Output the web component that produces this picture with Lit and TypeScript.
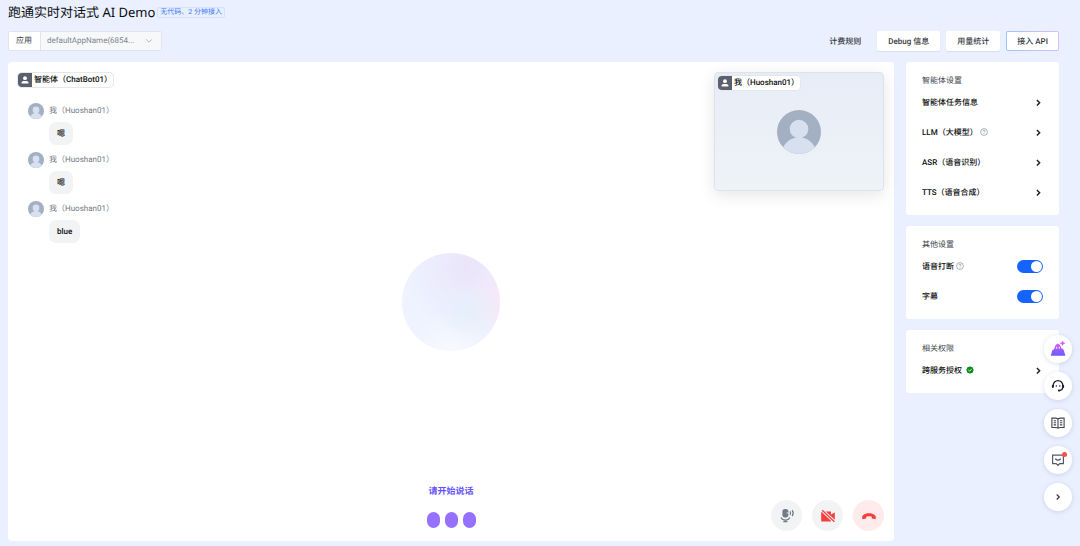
import { LitElement, html, css, svg, nothing } from "lit";
import { customElement, property, state } from "lit/decorators.js";

const avatar = html`<svg viewBox="0 0 44 44" aria-hidden="true">
  <defs><clipPath id="round"><circle cx="22" cy="22" r="22" /></clipPath></defs>
  <g clip-path="url(#round)">
    <rect width="44" height="44" fill="#a3afc3" />
    <circle cx="22" cy="19" r="9.3" fill="#d6e0ef" />
    <path d="M4 44C6 33 13 27.5 22 27.5S38 33 40 44Z" fill="#d6e0ef" />
  </g>
</svg>`;

const chevronRight = html`<svg class="chevron" viewBox="0 0 8 8" aria-hidden="true">
  <path d="M2.6 1.8 5 4.2 2.6 6.6" fill="none" stroke="currentColor" stroke-width="1.3" />
</svg>`;

const helpIcon = html`<svg class="help" viewBox="0 0 16 16" aria-hidden="true">
  <circle cx="8" cy="8" r="6.8" fill="none" stroke="#80868f" stroke-width="1.3" />
  <path d="M5.8 6.6C5.8 5.2 6.8 4.4 8 4.4S10.2 5.2 10.2 6.4C10.2 7.8 8 7.8 8 9.4M8 10.6V12" fill="none" stroke="#80868f" stroke-width="1.3" />
</svg>`;

const okIcon = html`<svg class="help" viewBox="0 0 16 16" aria-hidden="true">
  <path d="M8 .6 10.2 1.8 12.8 2.2 14 5 15.4 8 14 11 12.8 13.8 10.2 14.2 8 15.4 5.8 14.2 3.2 13.8 2 11 .6 8 2 5 3.2 2.2 5.8 1.8Z" fill="#0b8a1c" />
  <path d="m4.8 8 2.3 2.3 4.2-4.4" fill="none" stroke="#fff" stroke-width="1.8" />
</svg>`;

@customElement("name-tag")
export class NameTag extends LitElement {
  @property() label = "";

  static styles = css`
    :host {
      display: inline-flex;
      height: 14px;
      overflow: hidden;
      box-sizing: border-box;
      border-radius: 4px;
      background: #fff;
      box-shadow: 0 0 0 1px #e5e7eb;
      color: #0c0d0e;
      font-size: 8px;
      font-weight: 500;
      line-height: 14px;
      white-space: nowrap;
    }
    .badge {
      width: 14px;
      height: 14px;
      flex: none;
      background: #5b616c;
    }
    .text {
      padding: 0 1px 0 2px;
    }
  `;

  render() {
    return html`<svg class="badge" viewBox="0 0 14 14" aria-hidden="true">
        <circle cx="7" cy="5.2" r="1.9" fill="#fff" />
        <path d="M3.6 10.6V9.6C3.6 8.2 5.4 7.9 7 7.9s3.4.3 3.4 1.7v1Z" fill="#fff" />
      </svg>
      <span class="text">${this.label}</span>`;
  }
}

@customElement("chat-message")
export class ChatMessage extends LitElement {
  @property() author = "";
  @property() text = "";

  static styles = css`
    :host {
      display: grid;
      grid-template-columns: 16px auto;
      column-gap: 5px;
      row-gap: 3px;
      justify-content: start;
      align-items: center;
      font-size: 8px;
    }
    .avatar {
      width: 16px;
      height: 16px;
    }
    .avatar svg {
      display: block;
    }
    .author {
      color: #737a87;
      line-height: 17px;
    }
    .bubble {
      grid-column: 2;
      justify-self: start;
      padding: 0 8px;
      border-radius: 7px;
      background: #f1f3f5;
      color: #0c0d0e;
      font-weight: 500;
      line-height: 23px;
    }
  `;

  render() {
    return html`<div class="avatar">${avatar}</div>
      <div class="author">${this.author}</div>
      <div class="bubble">${this.text}</div>`;
  }
}

@customElement("settings-card")
export class SettingsCard extends LitElement {
  @property() heading = "";

  static styles = css`
    :host {
      display: block;
      padding: 12px 16px 8px;
      border-radius: 3px;
      background: #fff;
    }
    .heading {
      margin: 0;
      color: #42464e;
      font-size: 8px;
      font-weight: 400;
      line-height: 13px;
    }
  `;

  render() {
    return html`<h2 class="heading">${this.heading}</h2>
      <slot></slot>`;
  }
}

interface Tool {
  label: string;
  dot?: boolean;
  icon: unknown;
}

const tools: Tool[] = [
  {
    label: "AI 助手",
    icon: svg`<defs><linearGradient id="peak" x1="0" y1="0" x2="0" y2="1"><stop offset="0" stop-color="#e35cf5"/><stop offset=".5" stop-color="#9a5cff"/><stop offset="1" stop-color="#6b5cff"/></linearGradient></defs>
      <path d="M.8 14.8 2.2 9.6Q2.8 8.4 4 8.2L5.4 4.4Q6 2.8 7.8 2.8T10.2 4.4L11.6 7.4Q13.2 7.6 13.8 9.2L15.4 14.8Z" fill="url(#peak)"/>
      <path d="M6.7 5.9v1.8M9.3 5.9v1.8" stroke="#fff" stroke-width="1"/>
      <path d="M12.6 0 13.3 1.6 15 2.3 13.3 3 12.6 4.8 11.9 3 10.2 2.3 11.9 1.6Z" fill="#d956f2" stroke="#d956f2" stroke-width=".4"/>`,
  },
  {
    label: "在线客服",
    icon: svg`<g fill="none" stroke="#1d2129" stroke-width="1.3"><path d="M3.2 8.4V7.4a4.8 4.8 0 0 1 9.6 0V9.2Q12.6 12.2 9.3 12.6"/></g>
      <rect x="1.9" y="6.8" width="1.9" height="3.2" rx=".9" fill="#1d2129"/><rect x="12.2" y="6.8" width="1.9" height="3.2" rx=".9" fill="#1d2129"/>
      <circle cx="9" cy="12.6" r="1.1" fill="#1d2129"/><path d="M6.3 7.2v1.5M9.8 7.2v1.5" stroke="#1d2129" stroke-width="1.1"/>`,
  },
  {
    label: "文档",
    icon: svg`<g fill="none" stroke="#42464e" stroke-width="1.1"><path d="M8 4Q7 3.1 5.4 3.1H1.9V12.5H5.6Q7.2 12.5 8 13.2 8.8 12.5 10.4 12.5H14.1V3.1H10.6Q9 3.1 8 4V13"/><path d="M3.7 5.7H6.1M3.7 7.8H6.1M3.7 9.9H6.1M9.9 5.7h2.4M9.9 7.8h2.4M9.9 9.9h2.4"/></g>`,
  },
  {
    label: "反馈",
    dot: true,
    icon: svg`<g fill="none" stroke="#555b66" stroke-width="1.2"><path d="M2.6 3.2H13.4V11.6H9.8L8 13.3 6.2 11.6H2.6Z"/><path d="M5.2 6.8Q8 9.5 10.8 6.8"/></g>`,
  },
  {
    label: "收起",
    icon: svg`<path d="M6.7 5.4 9.2 8 6.7 10.6" fill="none" stroke="#42464e" stroke-width="1.4"/>`,
  },
];

@customElement("app-root")
export class AppRoot extends LitElement {
  @state() private messages = [
    { author: "我（Huoshan01）", text: "嗯" },
    { author: "我（Huoshan01）", text: "嗯" },
    { author: "我（Huoshan01）", text: "blue" },
  ];

  private agentItems = [
    { label: "智能体任务信息" },
    { label: "LLM（大模型）", help: true },
    { label: "ASR（语音识别）" },
    { label: "TTS（语音合成）" },
  ];

  static styles = css`
    :host {
      display: flex;
      flex-direction: column;
      box-sizing: border-box;
      min-height: 100vh;
      padding: 4px 21px 5px 8px;
      background: #eaf0ff;
      color: #0c0d0e;
      font-family: Roboto, "Noto Sans CJK SC", sans-serif;
      font-size: 8px;
      text-rendering: geometricPrecision;
    }
    button,
    select {
      margin: 0;
      border: 0;
      font: inherit;
      color: inherit;
      cursor: pointer;
      text-rendering: inherit;
    }
    .titlebar {
      display: flex;
      align-items: center;
      gap: 2px;
      height: 16px;
    }
    .title {
      margin: 0;
      font-family: "Noto Sans", "Noto Sans CJK SC", sans-serif;
      font-size: 13px;
      font-weight: 400;
      line-height: 16px;
    }
    .promo {
      padding: 0 2px;
      border: 1px solid #d5e0ff;
      border-radius: 2px;
      background: #e8efff;
      color: #3d76f5;
      font-size: 7px;
      line-height: 9px;
    }
    .toolbar {
      display: flex;
      justify-content: space-between;
      margin: 11px 0;
    }
    .app-picker {
      display: flex;
      position: relative;
      height: 20px;
      box-sizing: border-box;
      border: 1px solid #e0e4ec;
      border-radius: 2px;
      background: #fff;
      line-height: 18px;
      color: #42464e;
    }
    .picker-label {
      padding: 0 8px 0 7px;
    }
    .picker {
      appearance: none;
      width: 121px;
      padding: 0 20px 0 6px;
      border-left: 1px solid #e0e4ec;
      border-radius: 0;
      background: #f6f8fa;
      color: #80868f;
    }
    .picker-arrow {
      position: absolute;
      right: 8px;
      top: 5px;
      width: 8px;
      height: 8px;
      pointer-events: none;
    }
    .actions {
      display: flex;
      align-items: center;
      gap: 6px;
      color: #35393f;
      font-weight: 500;
    }
    .pricing {
      margin-right: 10px;
      color: inherit;
      text-decoration: none;
    }
    .action {
      height: 20px;
      padding: 0 10px;
      border: 1px solid transparent;
      border-radius: 2px;
      background: #fff;
      box-shadow: 0 1px 1px #d9deeb;
    }
    .action.primary {
      background:
        linear-gradient(#fff, #fff) padding-box,
        linear-gradient(90deg, #9cc5fb, #d8c0f8) border-box;
      box-shadow: none;
    }
    .content {
      display: grid;
      grid-template-columns: minmax(0, 1fr) 153px;
      gap: 12px;
      flex: 1;
    }
    .stage {
      display: grid;
      grid-template: 1fr auto 1fr / minmax(0, 1fr) auto minmax(0, 1fr);
      padding: 10px;
      border-radius: 4px;
      background: #fff;
    }
    .chat {
      grid-area: 1 / 1 / 3 / 2;
      padding-top: 1px;
    }
    .chat name-tag {
      vertical-align: top;
    }
    .messages {
      display: flex;
      flex-direction: column;
      gap: 6px;
      margin-top: 15px;
      padding-left: 10px;
    }
    .camera {
      grid-area: 1 / 3;
      justify-self: end;
      align-self: start;
      display: grid;
      grid-template-rows: 14px 1fr;
      justify-items: start;
      box-sizing: border-box;
      width: 170px;
      height: 119px;
      padding: 3px;
      border: 1px solid #dce3ed;
      border-radius: 4px;
      background: linear-gradient(#e7edf7, #eef3f7);
      box-shadow: 0 4px 16px rgba(0, 0, 0, 0.1);
    }
    .camera-avatar {
      width: 44px;
      height: 44px;
      margin-top: 20px;
      justify-self: center;
    }
    .orb {
      grid-area: 2 / 2;
      width: 98px;
      height: 98px;
      border-radius: 50%;
      background:
        radial-gradient(circle at 66% 60%, #e5f0fb 0, rgba(229, 240, 251, 0) 36%),
        radial-gradient(circle at 102% 52%, #f6e7f8 0, rgba(246, 231, 248, 0) 36%),
        radial-gradient(circle at 50% 104%, #fafaff 0, rgba(250, 250, 255, 0) 36%),
        radial-gradient(circle at 66% 16%, #eae4f9 0, rgba(234, 228, 249, 0) 60%),
        #eef3ff;
    }
    .status {
      grid-area: 3 / 2;
      align-self: end;
      display: grid;
      justify-items: center;
      gap: 13px;
      padding-bottom: 3px;
      color: #6553ff;
      font-size: 9px;
      font-weight: 600;
      line-height: 13px;
    }
    .dots {
      display: flex;
      gap: 5px;
    }
    .dot {
      width: 13px;
      height: 16px;
      border-radius: 7px;
      background: #9670ff;
    }
    .controls {
      grid-area: 3 / 3;
      align-self: end;
      justify-self: end;
      display: flex;
      gap: 10px;
    }
    .control {
      display: grid;
      place-items: center;
      width: 31px;
      height: 31px;
      padding: 0;
      border-radius: 50%;
      background: #f1f3f5;
    }
    .control.danger {
      background: #ffebeb;
    }
    .control svg {
      width: 16px;
      height: 16px;
    }
    .sidebar {
      display: flex;
      flex-direction: column;
      gap: 11px;
    }
    .row {
      display: flex;
      align-items: center;
      gap: 3px;
      width: 100%;
      height: 30px;
      padding: 0;
      background: none;
      font-size: 8px;
      font-weight: 500;
      text-align: left;
    }
    .row-label {
      display: flex;
      align-items: center;
      gap: 2px;
      flex: 1;
    }
    .help {
      width: 8px;
      height: 8px;
    }
    .granted {
      gap: 4px;
    }
    .chevron {
      width: 9px;
      height: 9px;
      color: #1d2129;
    }
    .switch {
      appearance: none;
      display: flex;
      width: 26px;
      height: 13px;
      margin: 0;
      padding: 1px;
      box-sizing: border-box;
      border-radius: 7px;
      background: #c9cdd4;
      cursor: pointer;
    }
    .switch::before {
      content: "";
      width: 11px;
      height: 11px;
      border-radius: 50%;
      background: #fff;
    }
    .switch:checked {
      justify-content: flex-end;
      background: #1664ff;
    }
    .tools {
      position: fixed;
      right: 8px;
      bottom: 35px;
      display: flex;
      flex-direction: column;
      gap: 9px;
    }
    .tool {
      position: relative;
      display: grid;
      place-items: center;
      width: 28px;
      height: 28px;
      padding: 0;
      border-radius: 50%;
      background: #fff;
      box-shadow: 0 1px 5px rgba(40, 60, 110, 0.16);
    }
    .tool svg {
      width: 16px;
      height: 16px;
    }
    .alert {
      position: absolute;
      top: 6px;
      right: 5px;
      width: 5px;
      height: 5px;
      border-radius: 50%;
      background: #ff4d4f;
    }
  `;

  private renderSwitch(id: string, label: string, help = false) {
    return html`<div class="row">
      <span class="row-label"><label for=${id}>${label}</label>${help ? helpIcon : nothing}</span>
      <input class="switch" type="checkbox" role="switch" id=${id} checked />
    </div>`;
  }

  private renderStage() {
    return html`<main class="stage">
      <section class="chat">
        <name-tag label="智能体（ChatBot01）"></name-tag>
        <div class="messages">
          ${this.messages.map((m) => html`<chat-message .author=${m.author} .text=${m.text}></chat-message>`)}
        </div>
      </section>
      <section class="camera">
        <name-tag label="我（Huoshan01）"></name-tag>
        <div class="camera-avatar">${avatar}</div>
      </section>
      <div class="orb"></div>
      <div class="status">
        <span>请开始说话</span>
        <div class="dots"><i class="dot"></i><i class="dot"></i><i class="dot"></i></div>
      </div>
      <div class="controls">
        <button class="control" aria-label="麦克风">
          <svg viewBox="0 0 16 16">
            <rect x="3.4" y="1" width="6" height="8.4" rx="2.6" fill="#737a87" />
            <path d="M7.7 5h1.8" stroke="#f1f3f5" stroke-width="1" />
            <path d="M2 9.4C3 11.6 4.6 12 6.4 12S9.8 11.6 10.8 9.4M6.4 12V13.6M4.4 13.6H8.4M11 3.4Q12.2 5.2 11 7M13.2 2.2Q15.2 5.2 13.2 8.2" fill="none" stroke="#737a87" stroke-width="1.2" />
          </svg>
        </button>
        <button class="control" aria-label="摄像头">
          <svg viewBox="0 0 16 16">
            <path d="M1.2 3.6H11V6.6L14.8 4.4V12L11 9.8V13.4H1.2Z" fill="#f53f3f" />
            <path d="M1.4 1.6 14.8 14" stroke="#f1f3f5" stroke-width="3.2" />
            <path d="M2.2 2.2 14.4 13.8" stroke="#f53f3f" stroke-width="1.3" />
          </svg>
        </button>
        <button class="control danger" aria-label="挂断">
          <svg viewBox="0 0 16 16">
            <path d="M1.2 9.8C.6 7.2 4.4 5.2 8 5.2S15.4 7.2 14.8 9.8L14.5 11.2 10.9 10.6 10.6 8.6Q8 7.8 5.4 8.6L5.1 10.6 1.5 11.2Z" fill="#f53f3f" />
          </svg>
        </button>
      </div>
    </main>`;
  }

  render() {
    return html`
      <header class="titlebar">
        <h1 class="title">跑通实时对话式 AI Demo</h1>
        <span class="promo">无代码、2 分钟接入</span>
      </header>
      <div class="toolbar">
        <div class="app-picker">
          <label class="picker-label" for="app">应用</label>
          <select class="picker" id="app"><option>defaultAppName(6854...</option></select>
          <svg class="picker-arrow" viewBox="0 0 8 8" aria-hidden="true">
            <path d="M1.2 2.4 4 5.2 6.8 2.4" fill="none" stroke="#a9aeb8" stroke-width=".9" />
          </svg>
        </div>
        <nav class="actions">
          <a class="pricing" href="#pricing">计费规则</a>
          <button class="action">Debug 信息</button>
          <button class="action">用量统计</button>
          <button class="action primary">接入 API</button>
        </nav>
      </div>
      <div class="content">
        ${this.renderStage()}
        <aside class="sidebar">
          <settings-card heading="智能体设置">
            ${this.agentItems.map(
              (item) => html`<button class="row">
                <span class="row-label">${item.label}${item.help ? helpIcon : nothing}</span>${chevronRight}
              </button>`,
            )}
          </settings-card>
          <settings-card heading="其他设置">
            ${this.renderSwitch("interrupt", "语音打断", true)} ${this.renderSwitch("subtitle", "字幕")}
          </settings-card>
          <settings-card heading="相关权限">
            <button class="row"><span class="row-label granted">跨服务授权${okIcon}</span>${chevronRight}</button>
          </settings-card>
        </aside>
      </div>
      <div class="tools">
        ${tools.map(
          (t) => html`<button class="tool" aria-label=${t.label}>
            <svg viewBox="0 0 16 16">${t.icon}</svg>
            ${t.dot ? html`<span class="alert"></span>` : nothing}
          </button>`,
        )}
      </div>
    `;
  }
}
